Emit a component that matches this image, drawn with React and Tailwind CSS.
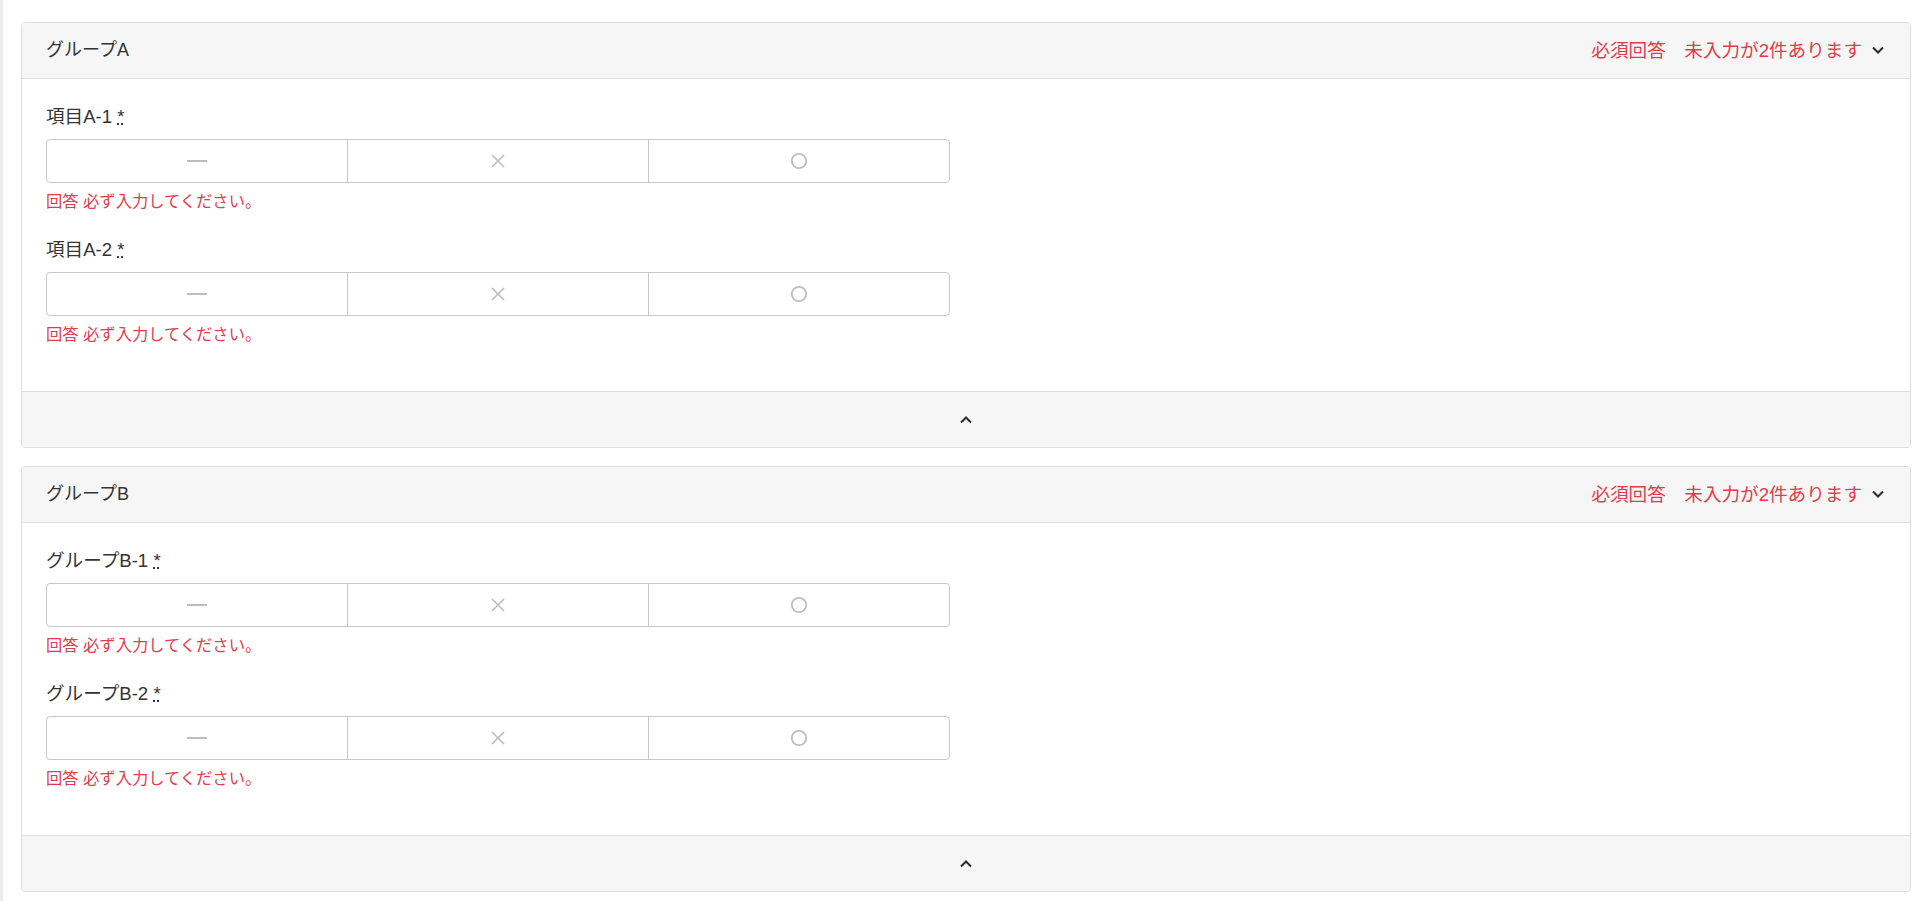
import React from "react";

const font = {
  fontFamily: '"Helvetica Neue", "Liberation Sans", "Noto Sans CJK JP", sans-serif',
};

const groups = [
  { name: "グループA", items: ["項目A-1", "項目A-2"] },
  { name: "グループB", items: ["グループB-1", "グループB-2"] },
];

function ChevronDown() {
  return (
    <svg width="16" height="16" viewBox="0 0 16 16" fill="none">
      <path d="M3 5.5L8 10.5L13 5.5" stroke="#2b2b2b" strokeWidth="2" />
    </svg>
  );
}

function ChevronUp() {
  return (
    <svg width="16" height="16" viewBox="0 0 16 16" fill="none">
      <path d="M3 10.5L8 5.5L13 10.5" stroke="#2b2b2b" strokeWidth="2" />
    </svg>
  );
}

function ChoiceButtons() {
  return (
    <div className="flex h-[44px] w-[904px] rounded-[4px] border border-[#c8c8c8] bg-white">
      <button type="button" className="flex flex-1 items-center justify-center">
        <span className="block h-[2px] w-[20px] bg-[#bdbdbd]" />
      </button>
      <button type="button" className="flex flex-1 items-center justify-center border-l border-[#c8c8c8]">
        <svg width="16" height="16" viewBox="0 0 16 16" fill="none">
          <path d="M2 2L14 14M14 2L2 14" stroke="#bdbdbd" strokeWidth="1.6" />
        </svg>
      </button>
      <button type="button" className="flex flex-1 items-center justify-center border-l border-[#c8c8c8]">
        <svg width="18" height="18" viewBox="0 0 18 18" fill="none">
          <circle cx="9" cy="9" r="7.2" stroke="#bdbdbd" strokeWidth="1.8" />
        </svg>
      </button>
    </div>
  );
}

function Group({ name, items }) {
  return (
    <section className="overflow-hidden rounded-[4px] border border-[#dedede]">
      {/* header */}
      <div className="flex h-[56px] items-center justify-between border-b border-[#dedede] bg-[#f6f6f6] px-6">
        <h2 className="text-[18px] text-[#333]">{name}</h2>
        <div className="flex items-center gap-2">
          <span className="text-[18.6px] text-[#e23c4c]">必須回答　未入力が2件あります</span>
          <ChevronDown />
        </div>
      </div>

      {/* body */}
      <div className="flex flex-col gap-[25px] bg-white px-6 pb-[47px] pt-6">
        {items.map((label) => (
          <div key={label}>
            <label className="mb-[10px] block pt-[2px] text-[18.6px] leading-[24px] text-[#333]">
              {label} <abbr title="required">*</abbr>
            </label>
            <ChoiceButtons />
            <p className="mt-2 text-[16.3px] leading-[20px] text-[#e23c4c]">回答 必ず入力してください。</p>
          </div>
        ))}
      </div>

      {/* footer */}
      <button
        type="button"
        className="flex h-[56px] w-full items-center justify-center border-t border-[#dedede] bg-[#f6f6f6]"
      >
        <ChevronUp />
      </button>
    </section>
  );
}

export default function App() {
  return (
    <div className="flex min-h-[901px] bg-white" style={font}>
      <div className="w-[3px] shrink-0 bg-[#ececec]" />
      <div className="flex flex-1 flex-col gap-[18px] pl-[18px] pr-[9px] pt-[22px]">
        {groups.map((g) => (
          <Group key={g.name} {...g} />
        ))}
      </div>
    </div>
  );
}
